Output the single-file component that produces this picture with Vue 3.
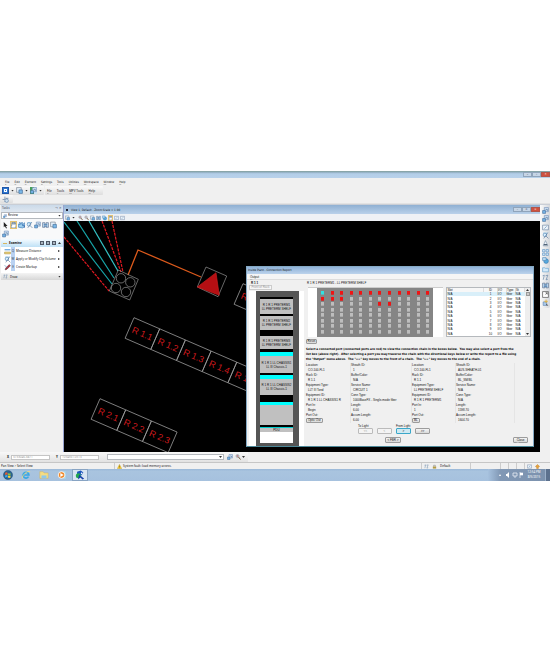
<script setup>
import { ref } from 'vue'

const menus = ['File', 'Edit', 'Element', 'Settings', 'Tools', 'Utilities', 'Workspace', 'Window', 'Help']
const subMenus = ['File', 'Tools', 'MPV Tools', 'Help']
const taskTools = ['cursor', 'hand', 'handblue', 'lens', 'page', 'grid', 'pages', 'page']
const examine = [
  { key: 'Q', icon: 'ruler', label: 'Measure Distance' },
  { key: 'W', icon: 'lens', label: 'Apply or Modify Clip Volume' },
  { key: 'E', icon: 'pen', label: 'Create Markup' },
]
const viewTools = ['zoomin', 'zoomout', 'pages', 'grid', 'orbit', 'hand', 'frame', 'frame']
const sideTools = ['page', 'page', 'frame', 'lens', 'cone', 'cells', 'orbit', 'folder', 'zigzag', 'grid', 'window', 'sparkpen']

const rowOne = ['R 1.1', 'R 1.2', 'R 1.3', 'R 1.4', 'R 1.5']
const rowTwo = ['R 2.1', 'R 2.2', 'R 2.3']

const red = new Set([1, 2, 3, 4, 5, 6, 7, 8, 9, 10, 11, 12, 13, 14, 30, 31])
const ports = Array.from({ length: 96 }, (_, i) => (i === 0 ? 'current' : red.has(i) ? 'red' : ''))

const left = [
  ['Location:', 'CO-100-FL1'], ['Rack ID:', 'R 1.1'], ['Equipment Type:', 'LLT III Tond'],
  ['Equipment ID:', 'R 1 R 1 LL CHASSIS1 R'], ['Port In:', 'Begin'],
]
const leftB = [
  ['Sheath ID:', '1'], ['Buffer/Color:', 'N/A'], ['Service Name:', 'CIRCUIT 1'],
  ['Conn Type:', '1000BaseFX - Single-mode fiber'], ['Length:', '6.00'], ['Accum Length:', '6.00'],
]
const right = [
  ['Location:', 'CO-100-FL1'], ['Rack ID:', 'R 1.1'], ['Equipment Type:', 'LL PRETERM SHELF'],
  ['Equipment ID:', 'R 1 R 1 PRETERM1'], ['Port In:', '1'],
]
const rightB = [
  ['Sheath ID:', 'AUS-SHEATH-01'], ['Buffer/Color:', 'BL_SM/BL'], ['Service Name:', 'N/A'],
  ['Conn Type:', 'N/A'], ['Length:', '1598.70'], ['Accum Length:', '1604.70'],
]
const coordX = ref('3733046.3871')
const coordY = ref('1094561.0513')
</script>

<template>
  <svg class="defs" aria-hidden="true">
    <symbol id="cursor" viewBox="0 0 12 12"><path d="M3 1v9l2-2 2 4 1.500-1-2-3.500h3z" fill="#222" /></symbol>
    <symbol id="hand" viewBox="0 0 12 12"><path d="M3 11 1 6l2 1V2l1.500 0 .5 3V1h1.500l.5 4 1-4h1v4l1-2 1 .5-1 5-1 2.500z" fill="#fff" stroke="#4d6f96" /></symbol>
    <symbol id="handblue" viewBox="0 0 12 12"><path d="M1 10V4l2 2V1l2 4 2-4 1 5 3-4v7l-3 2z" fill="#9fd0ef" stroke="#2a6db0" /><path d="M7 7h4v4" stroke="#1d4f97" fill="none" /></symbol>
    <symbol id="lens" viewBox="0 0 12 12"><path d="M2 1h8L7 5 3 7z" fill="#a9d2ee" /><circle cx="5" cy="5" r="3" fill="#d8f0ff" stroke="#5682ae" /><path d="m7 7 4 4M10 1 3 11" stroke="#4b6b90" /></symbol>
    <symbol id="page" viewBox="0 0 12 12"><path d="M4 1h7v7H4z" fill="#d7e9fa" stroke="#6684b0" /><path d="M1 6h5v5H1z" fill="#73b2e3" stroke="#456c9d" /><path d="M6 4h3v3" fill="none" stroke="#385980" /></symbol>
    <symbol id="pages" viewBox="0 0 12 12"><path d="M1 1h8v8H1z" fill="#e4f0fa" stroke="#6c7785" /><path d="M5 5h6v6H5z" fill="#7ab8e8" stroke="#376493" /></symbol>
    <symbol id="grid" viewBox="0 0 12 12"><path d="M1 2h4v8H1zM7 2h4v8H7z" fill="#c8e0f5" stroke="#4b6180" /><path d="M3 5h6M3 8h6" stroke="#246daf" /></symbol>
    <symbol id="cells" viewBox="0 0 12 12"><path d="M1 1h4v4H1zM7 1h4v4H7zM1 7h4v4H1zM7 7h4v4H7z" fill="#d8ecfb" stroke="#4d88bc" /></symbol>
    <symbol id="ruler" viewBox="0 0 12 12"><path d="M1 3h10" stroke="#5c9edc" stroke-width="2" /><path d="M1 7h10v3H1z" fill="#f4d776" stroke="#a79046" /></symbol>
    <symbol id="pen" viewBox="0 0 12 12"><path d="m2 10 1-3 6-6 2 2-6 6z" fill="#b92b33" stroke="#5a3b4e" /><path d="m1 2 5 5" stroke="#5588bb" /></symbol>
    <symbol id="sparkpen" viewBox="0 0 12 12"><path d="M2 5h6v6H2z" fill="#a9c9ea" stroke="#5c80ac" /><path d="M7 1v6M4 4h6" stroke="#e2b13d" stroke-width="1.500" /><path d="m7 8 4 3H8z" fill="#333" /></symbol>
    <symbol id="rotate" viewBox="0 0 12 12"><path d="M5 1v5H1M4 9h3V4h4" fill="none" stroke="#6f87a3" stroke-width="1.300" /><circle cx="8" cy="8" r="3" fill="#cfe1f1" stroke="#5c7fa6" /></symbol>
    <symbol id="zoomin" viewBox="0 0 12 12"><circle cx="5" cy="4" r="3" fill="#d9e7ef" stroke="#707a85" /><path d="m7 6 4 5" stroke="#735738" stroke-width="2" /><path d="M5 2v4M3 4h4" stroke="#b65656" /></symbol>
    <symbol id="zoomout" viewBox="0 0 12 12"><circle cx="5" cy="4" r="3" fill="#d9e7ef" stroke="#707a85" /><path d="m7 6 4 5" stroke="#735738" stroke-width="2" /><path d="M3 4h4" stroke="#b65656" /></symbol>
    <symbol id="orbit" viewBox="0 0 12 12"><circle cx="7" cy="7" r="4" fill="#57aade" stroke="#3675ad" /><path d="M1 1h6v5H1z" fill="#b9dcf3" stroke="#4b84b5" /></symbol>
    <symbol id="frame" viewBox="0 0 12 12"><path d="M1 2h10v8H1z" fill="#edf4fa" stroke="#5e7898" /><path d="m4 8 4-4" stroke="#4779aa" /></symbol>
    <symbol id="cone" viewBox="0 0 12 12"><path d="m6 1-4 9h8z" fill="#f4f7fb" stroke="#718ba6" /><path d="M3 8h6" stroke="#46576b" stroke-width="2" /></symbol>
    <symbol id="folder" viewBox="0 0 12 12"><path d="M1 3h4l1 1h5v6H1z" fill="#d4ebfb" stroke="#5d9bc9" /></symbol>
    <symbol id="zigzag" viewBox="0 0 12 12"><path d="m1 3 3-1-2 8M6 3l4-1-3 8 3-1" fill="none" stroke="#52779c" /></symbol>
    <symbol id="window" viewBox="0 0 12 12"><path d="M1 1h10v10H1z" fill="#fff" stroke="#333" /><path d="m6 6 3-3M6 3h3v3" stroke="#333" fill="none" /></symbol>
  </svg>

  <main class="desktop">
    <header class="titlebar">
      <span class="winbtns"><button aria-label="Minimize">–</button><button aria-label="Restore">▫</button><button class="x" aria-label="Close window">×</button></span>
    </header>
    <nav class="menubar"><a v-for="m in menus" :key="m" href="#"><u>{{ m[0] }}</u>{{ m.slice(1) }}</a></nav>
    <div class="toolrow">
      <div class="bar">
        <button class="big blue" aria-label="Element selection"><i></i></button><b class="caret"></b>
        <button class="big" aria-label="Fence"><svg><use href="#pages" /></svg></button><b class="caret"></b>
        <button class="big green" aria-label="Models"><svg><use href="#page" /></svg></button><b class="caret"></b>
      </div>
      <nav class="bar submenu"><a v-for="m in subMenus" :key="m" href="#"><u>{{ m[0] }}</u>{{ m.slice(1) }}</a></nav>
    </div>
    <div class="toolrow second"><div class="bar"><button class="big" aria-label="Rotate"><svg><use href="#rotate" /></svg></button></div></div>

    <div class="work">
      <aside class="tasks">
        <div class="taskhead"><span>Tasks</span><span>⊣ ✕</span></div>
        <label class="select"><svg><use href="#page" /></svg>
          <select aria-label="Task"><option>Review</option></select><b class="caret"></b></label>
        <div class="palette">
          <button v-for="(t, i) in taskTools" :key="i" :class="{ on: i === 1 }" :aria-label="t"><svg><use :href="'#' + t" /></svg></button>
        </div>
        <section class="group">
          <h2><span class="dash"></span>Examine<span class="sp"></span><i class="sq"></i><i class="sq"></i><i class="sq"></i><b class="caret up"></b></h2>
          <button v-for="e in examine" :key="e.key" class="item">
            <svg><use :href="'#' + e.icon" /></svg><kbd>{{ e.key }}</kbd><span>{{ e.label }}</span><b class="go"></b>
          </button>
        </section>
        <h2 class="draw"><svg><use href="#zigzag" /></svg>Draw<span class="sp"></span><b class="caret"></b></h2>
      </aside>

      <section class="view">
        <header class="viewtitle"><i class="mark"></i><span>View 1, Default - Zoom Scale = 1.00</span>
          <span class="winbtns"><button aria-label="Minimize view">–</button><button aria-label="Restore view">▫</button><button class="x" aria-label="Close view">×</button></span>
        </header>
        <div class="viewtools">
          <button aria-label="View attributes"><svg><use href="#pages" /></svg></button><b class="caret"></b>
          <button v-for="(t, i) in viewTools" :key="i" :class="{ on: i === 5 }" :aria-label="t"><svg><use :href="'#' + t" /></svg></button>
        </div>
        <div class="canvas">
          <svg class="plan" viewBox="64 220 476 231">
            <g fill="none" stroke="#17a3a6" stroke-width="1.200">
              <path d="M64 221 112 283M77 220l37 57" /><path d="m89 220 29 50" stroke="#35c2c5" />
            </g>
            <g fill="none" stroke="#e01820" stroke-width="1.200" stroke-dasharray="3 1">
              <path d="m64 236 45 54M102 220l19 51M112 220l11 51" />
            </g>
            <path d="m128 274 10-25 63 27" fill="none" stroke="#dc5a1c" stroke-width="1.300" />
            <g fill="none" stroke="#929292" stroke-width=".7">
              <path d="m118.300 269 20 9.300-8.600 20.700-20.400-9z" />
              <circle cx="121" cy="277.300" r="4.700" /><circle cx="130.300" cy="281.300" r="4.700" />
              <circle cx="116" cy="287" r="4.700" /><circle cx="126" cy="291" r="4.700" />
              <path d="m206 266 20.700 9-8.700 20.700-20.700-9.700z" />
            </g>
            <path d="m216 271.700-18.700 14.300 22 8.300z" fill="#b50f13" stroke="#d32020" stroke-width=".6" />
            <g transform="translate(243 282.700) rotate(23.400)">
              <rect width="28" height="22.400" /><text x="14" y="14.500" text-anchor="middle">R 0.1</text>
            </g>
            <g transform="translate(134 316.700) rotate(23.400)">
              <g v-for="(r, i) in rowOne" :key="r"><rect :x="i * 28" width="28" height="22.400" /><text :x="i * 28 + 14" y="14.500" text-anchor="middle">{{ r }}</text></g>
            </g>
            <g transform="translate(100 397.700) rotate(23.400)">
              <g v-for="(r, i) in rowTwo" :key="r"><rect :x="i * 28" width="28" height="22.400" /><text :x="i * 28 + 14" y="14.500" text-anchor="middle">{{ r }}</text></g>
            </g>
          </svg>
        </div>
      </section>

      <aside class="side"><div class="sidebar">
        <button v-for="(t, i) in sideTools" :key="i" :aria-label="t"><svg><use :href="'#' + t" /></svg></button>
      </div></aside>

      <section class="dialog" role="dialog" aria-label="Connection Report">
        <header>Inside Plant - Connection Report</header>
        <nav><a href="#"><u>O</u>utput</a></nav>
        <div class="dbody">
          <div class="rackcol">
            <strong>R 1 1</strong>
            <button class="front">Front of Rack</button>
            <div class="rackbg"><div class="rack"><div class="slots">
              <div class="shelf a">R 1 R 1 PRETERM1<br>LL PRETERM SHELF</div>
              <div class="shelf b">R 1 R 1 PRETERM2<br>LL PRETERM SHELF</div>
              <div class="shelf c">R 1 R 1 PRETERM3<br>LL PRETERM SHELF</div>
              <div class="shelf d">R 1 R 1 LL CHASSIS1<br>LL III Chassis-1</div>
              <div class="shelf e">R 1 R 1 LL CHASSIS2<br>LL III Chassis-1</div>
              <div class="shelf f"></div>
              <div class="shelf pdu">PDU</div>
              <div class="shelf blank"></div>
            </div></div></div>
          </div>
          <div class="report">
            <div class="rtitle">R 1 R 1 PRETERM1 - LL PRETERM SHELF</div>
            <div class="top">
              <div class="portbox"><div class="ports"><i v-for="(p, i) in ports" :key="i" :class="p"></i></div></div>
              <div class="list">
                <table>
                  <thead><tr><th class="slot">Slot</th><th class="id">ID</th><th>I/O</th><th>Type</th><th>St</th></tr></thead>
                  <tbody><tr v-for="n in 10" :key="n" :class="{ sel: n === 1 }"><td>N/A</td><td class="id">{{ n }}</td><td>I/O</td><td>fiber</td><td>N/A</td></tr></tbody>
                </table>
                <div class="scroll"><b class="caret up"></b><i></i><span class="sp"></span><b class="caret"></b></div>
              </div>
            </div>
            <button class="btn reset">Reset</button>
            <p>Select a connected port (connected ports are red) to view the connection chain in the boxes below.&nbsp; You may also select a port from the<br>list box (above right).&nbsp; After selecting a port you may traverse the chain with the directional keys below or write the report to a file using<br>the "Output" menu above.&nbsp; The "&lt;&lt;" key moves to the front of a chain.&nbsp; The "&gt;&gt;" key moves to the end of a chain.</p>
            <div class="info">
              <dl><template v-for="f in left" :key="f[0]"><dt>{{ f[0] }}</dt><dd>{{ f[1] }}</dd></template><dt>Port Out:</dt><dd class="cell"><button class="btn">Optic Out</button></dd></dl>
              <dl class="sec"><template v-for="f in leftB" :key="f[0]"><dt>{{ f[0] }}</dt><dd>{{ f[1] }}</dd></template></dl>
              <dl><template v-for="f in right" :key="f[0]"><dt>{{ f[0] }}</dt><dd>{{ f[1] }}</dd></template><dt>Port Out:</dt><dd class="cell"><button class="btn">BL</button></dd></dl>
              <dl class="sec"><template v-for="f in rightB" :key="f[0]"><dt>{{ f[0] }}</dt><dd>{{ f[1] }}</dd></template></dl>
            </div>
            <div class="nav">
              <div><span>To Light</span><button class="btn off">&lt;&lt;</button></div>
              <div><span></span><button class="btn off">&lt;</button></div>
              <div><span>From Light</span><button class="btn focus">&gt;</button></div>
              <div><span></span><button class="btn">&gt;&gt;</button></div>
            </div>
            <div class="foot"><span></span><button class="btn">&lt; FBR &gt;</button><button class="btn close"><u>C</u>lose</button></div>
          </div>
        </div>
      </section>
    </div>

    <div class="coords">
      <label for="cx">X</label><input id="cx" v-model="coordX">
      <label for="cy">Y</label><input id="cy" v-model="coordY">
      <label class="select keyin"><select aria-label="Key-in"><option></option></select><b class="caret"></b></label>
      <button aria-label="Find"><svg><use href="#page" /></svg></button>
      <button aria-label="Filter"><svg><use href="#zoomin" /></svg></button><b class="caret"></b>
    </div>
    <footer class="status">
      <span class="msg">Pan View &gt; Select View</span>
      <span class="warn"><svg viewBox="0 0 12 12"><path d="m6 1 5 10H1z" fill="#ffd42e" stroke="#b68e15" /><path d="M6 4v4M6 9v1" stroke="#222" /></svg>System fault: load memory access.</span>
      <span class="lvl"><svg><use href="#zigzag" /></svg><svg viewBox="0 0 12 12"><path d="M2 6h8v5H2z" fill="#b39b45" /><path d="M4 6V3h4v3" fill="none" stroke="#666" /></svg>Default</span>
      <span class="c1"></span><span class="c2"></span><span class="c2"></span><span class="c2"></span>
      <span class="c3"><svg><use href="#frame" /></svg><svg viewBox="0 0 12 12"><path d="m6 1 5 5-3 1v4H4V7L1 6z" fill="#e8a63c" stroke="#b5731f" /></svg></span>
    </footer>
    <footer class="taskbar">
      <button aria-label="Start"><svg viewBox="0 0 24 24"><circle cx="12" cy="12" r="11" fill="#286493" stroke="#1e4560" /><path d="M5 7q4-3 6 0v5q-3-2-6 0z" fill="#e75b31" /><path d="M12 7q3 3 6 0v5q-3 3-6 0z" fill="#8dc63f" /><path d="M5 13q4-2 6 0v5q-3-2-6 0z" fill="#39a9e9" /><path d="M12 13q3 3 6 0v5q-3 2-6 0z" fill="#ffd03b" /></svg></button>
      <button aria-label="Browser"><svg viewBox="0 0 24 24"><path d="M18 16a7 7 0 1 1 1-4H7" fill="none" stroke="#36a7e5" stroke-width="4" /><path d="M3 20C3 12 15 1 22 4" fill="none" stroke="#f4dc77" stroke-width="2" /></svg></button>
      <button aria-label="Explorer"><svg viewBox="0 0 24 24"><path d="M2 4h8l2 3h10v13H2z" fill="#f5dc83" stroke="#d0af52" /><path d="M6 13h12v7H6z" fill="#8fc8ea" /></svg></button>
      <button aria-label="Media player"><svg viewBox="0 0 24 24"><path d="M15 3h6v18h-6z" fill="#a6dbef" /><circle cx="11" cy="12" r="8" fill="#ee8526" stroke="#fff" stroke-width="2" /><path d="m8 7 8 5-8 5z" fill="#fff" /></svg></button>
      <button class="active" aria-label="Map editor"><svg viewBox="0 0 24 24"><path d="M5 4 14 1l6 5-5 7-10-3z" fill="#1c55bd" /><circle cx="8" cy="14" r="6" fill="#24a850" /><path d="m10 11 12 10-4 2-5-5-6 5z" fill="#173fa8" /><circle cx="16" cy="8" r="2" fill="#fff" /></svg></button>
      <span class="sp"></span>
      <div class="tray">
        <svg viewBox="0 0 24 8"><path d="m0 5 1-2 1 2z" fill="#fff" /><path d="M7 3h1l2-2v6L8 5H7z" fill="#fff" /><path d="M14 2h4v3h-4zM15 6h2" fill="none" stroke="#e8eef5" stroke-width=".8" /><path d="M21 1v6M21 2h3v2h-3" fill="#fff" stroke="#fff" stroke-width=".6" /></svg>
        <time>12:54 PM<br>8/5/2015</time><i></i>
      </div>
    </footer>
  </main>
</template>

<style>
body { background: #fff; }
#app { padding: 171px 0; }
</style>

<style scoped>
* { box-sizing: border-box; }
.defs { position: absolute; width: 0; height: 0; }
.desktop { font: 3px/4px "Noto Sans", "Open Sans", sans-serif; color: #111; background: #f0f0f0; overflow: hidden; }
button, input, select { font: inherit; color: inherit; margin: 0; padding: 0; border: 0; background: none; min-width: 0; border-radius: 0; }
button { display: flex; align-items: center; justify-content: center; }
button svg { width: 100%; height: 100%; display: block; }
a { color: inherit; text-decoration: none; white-space: nowrap; }
u { text-decoration-thickness: 1px; text-decoration-color: #bbb; }
.sp { flex: 1; }
.caret { width: 3px; height: 2px; flex: none; background: #333; clip-path: polygon(0 0, 100% 0, 50% 100%); }
.caret.up { clip-path: polygon(50% 0, 100% 100%, 0 100%); }

.titlebar { height: 7px; display: flex; justify-content: flex-end; background: linear-gradient(#8da9bb, #b3cee8 30%, #b8d1ea); border-top: 1px solid #88a5a9; }
.winbtns { display: flex; height: 5px; margin-left: auto; }
.winbtns button { width: 9px; border: 1px solid #8fa4bb; background: #c6d5e6; color: #334; line-height: 3px; }
.winbtns .x { background: #cf5140; border-color: #b0564c; color: #fff; }
.menubar { height: 8px; display: flex; align-items: center; gap: 5px; padding-left: 5px; font-family: "DejaVu Sans Condensed", "Noto Sans", sans-serif; }
.toolrow { height: 9px; display: flex; gap: 1px; }
.bar { display: flex; align-items: center; gap: 1px; padding: 0 2px; background: linear-gradient(#fafafa, #dedede); border-radius: 1px; }
.toolrow > .bar:first-child { gap: 2px; }
.submenu { width: 58px; gap: 5px; }
.second { border-bottom: 1px solid #e2e2e2; }
.second .bar { width: 13px; }
.big { width: 7px; height: 7px; }
.big.blue { background: #2f78d1; border: 1px solid #1e57a9; }
.big.blue i { width: 3px; height: 3px; border: 1px solid #fff; }
.big.green { background: linear-gradient(90deg, #45a058 50%, #cfe4f3 50%); }

.work { position: relative; display: flex; height: 248px; border-top: 1px solid #c9ced6; }
.tasks { width: 63px; flex: none; padding-left: 1px; background: #f0f0f0; }
.taskhead { height: 7px; display: flex; justify-content: space-between; padding: 1px 1px 0; background: linear-gradient(#cbdae9, #dfe7f0); color: #445; }
.select { display: flex; align-items: center; height: 7px; background: #fff; border: 1px solid #b5b9be; padding: 0 1px; gap: 1px; }
.select svg { width: 4px; height: 4px; }
.select select { flex: 1; appearance: none; height: 5px; line-height: 5px; outline: 0; }
.palette { display: grid; grid-template-columns: repeat(7, 7px); grid-auto-rows: 8px; gap: 1px; padding: 2px 1px; background: #f8f9fa; height: 20px; }
.on { background: #fde2a0; outline: 1px solid #e3c274; outline-offset: -1px; }
.group { background: #fff; height: 34px; }
h2 { margin: 0; height: 8px; display: flex; align-items: center; gap: 2px; padding: 0 2px; font-size: 3px; background: linear-gradient(#f5fbff, #bfe1f6); }
.dash { width: 4px; height: 1px; background: #d8b65e; }
.sq { width: 4px; height: 4px; border: 1px solid #4e5866; background: #a9b5c0; }
.item { width: 100%; height: 8px; padding-left: 3px; justify-content: flex-start; text-align: left; }
.item svg { width: 7px; height: 7px; flex: none; }
.item kbd { font: inherit; width: 4px; height: 8px; line-height: 8px; text-align: center; background: #bad2f2; color: #345; }
.item span { flex: 1; padding-left: 1px; white-space: nowrap; }
.go { width: 2px; height: 2px; margin-right: 3px; background: #222; clip-path: polygon(0 0, 100% 50%, 0 100%); }
.draw { height: 7px; background: linear-gradient(#f4f4f4, #d7d7d7); font-weight: 400; }
.draw svg { width: 5px; height: 5px; }

.view { flex: 1; min-width: 0; display: flex; flex-direction: column; border-left: 1px solid #98a3cf; }
.viewtitle { height: 9px; display: flex; align-items: center; gap: 3px; padding-left: 2px; background: linear-gradient(#8fb0d3, #b9d1ea); font-family: "DejaVu Sans Condensed", "Noto Sans", sans-serif; }
.viewtitle > span:nth-child(2) { white-space: nowrap; }
.mark { width: 2px; height: 2px; background: #223; }
.viewtools { height: 7px; display: flex; align-items: center; gap: 1px; padding-left: 1px; background: #eef1f5; }
.viewtools button { width: 5px; height: 6px; }
.viewtools .caret { margin: 0 2px 0 1px; }
.canvas { flex: 1; min-height: 0; background: #000; overflow: hidden; }
.plan { display: block; width: 476px; height: 231px; }
.plan rect { fill: none; stroke: #a0a0a0; stroke-width: .7px; }
.plan text { font: 9px "Liberation Sans", Arial, sans-serif; fill: #d01a1e; }
.side { width: 10px; flex: none; }
.sidebar { height: 103px; padding: 2px 1px; display: flex; flex-direction: column; justify-content: space-between; align-items: center; background: linear-gradient(90deg, #fafafa, #d5d8dc); border-radius: 0 0 2px 2px; }
.sidebar button { width: 7px; height: 7px; }

.dialog { position: absolute; left: 246px; top: 61px; width: 288px; height: 181px; display: flex; flex-direction: column; background: #f0f0f0; border: 1px solid #85a9c4; border-bottom-color: #4b8797; font-family: "Liberation Sans", Arial, sans-serif; }
.dialog header { height: 7px; line-height: 7px; padding-left: 1px; font-family: "DejaVu Sans Condensed", "Noto Sans", sans-serif; background: linear-gradient(#8fb2d8, #bcd3ec); }
.dialog nav { height: 6px; line-height: 6px; padding-left: 3px; background: #f5f5f5; border-bottom: 1px solid #ddd; }
.dbody { flex: 1; min-height: 0; display: flex; padding-top: 1px; }
.rackcol { width: 57px; flex: none; display: flex; flex-direction: column; padding-left: 2px; }
.rackcol strong { padding-left: 2px; line-height: 4px; }
.front { width: 23px; height: 5px; border: 1px solid #ccc; color: #999; background: #f6f6f6; line-height: 3px; margin-bottom: 1px; white-space: nowrap; }
.rackbg { flex: 1; background: #fff; display: flex; padding: 0 5px 0 7px; }
.rack { flex: 1; background: #555; padding: 6px 6px 3px 4px; display: flex; }
.slots { flex: 1; background: #000; display: flex; flex-direction: column; padding-top: 2px; }
.shelf { background: #c0c0c0; display: flex; flex-direction: column; justify-content: center; text-align: center; white-space: nowrap; color: #111; }
.a { height: 15px; margin-bottom: 2px; }
.b { height: 14px; margin-bottom: 6px; }
.c { height: 13px; margin-bottom: 3px; }
.d { height: 21px; margin-bottom: 2px; border-top: 4px solid #0ff; }
.e { height: 20px; margin-bottom: 7px; border-top: 4px solid #0ff; }
.f { height: 23px; margin-bottom: 2px; border-top: 3px solid #0ff; }
.pdu { height: 5px; border-top: 1px solid #0cc; }
.blank { flex: 1; background: #fff; }

.report { flex: 1; min-width: 0; display: flex; flex-direction: column; padding: 0 2px; }
.rtitle { padding-left: 1px; height: 6px; }
.top { display: grid; grid-template-columns: 8fr 5fr; gap: 3px; height: 50px; margin-left: 2px; }
.portbox { background: #fff; padding: 0 10px 0 9px; border-top: 1px solid #ccc; }
.ports { height: 100%; background: #858585; display: grid; grid-template-columns: repeat(12, 3px); grid-template-rows: repeat(8, 4px); justify-content: space-between; align-content: space-between; padding: 3px 4px; }
.ports i { background: #bdbdbd; border-bottom: 1px solid #aaa; }
.ports .red { background: #f01414; border-color: #c33; }
.ports .current { background: #2ee3e3; border-color: #5bb; }
.list { display: flex; background: #fff; border: 1px solid #b5b9bd; }
table { flex: 1; border-collapse: collapse; height: 48px; line-height: 4px; table-layout: fixed; width: 0; }
th, td { padding: 0; text-align: left; font-weight: 400; white-space: nowrap; width: 9px; }
th { border-right: 1px solid #ddd; background: #f7f7f7; }
th.slot { width: auto; }
.id { width: 14px; text-align: center; }
.sel td { background: #d9eff9; }
.scroll { width: 5px; background: #eee; display: flex; flex-direction: column; align-items: center; padding: 1px 0; }
.scroll i { width: 4px; height: 4px; margin-top: 1px; background: #ccc; border: 1px solid #999; }
.btn { height: 5px; line-height: 3px; border: 1px solid #9c9c9c; border-radius: 1px; background: linear-gradient(#f5f5f5, #d8d8d8); white-space: nowrap; padding: 0 1px; }
.reset { width: 11px; margin-top: 2px; flex: none; }
p { margin: 3px 0 1px; font-family: "DejaVu Sans Condensed", "Noto Sans", sans-serif; font-weight: 700; line-height: 5px; white-space: nowrap; color: #000; }
.info { display: grid; grid-template-columns: 44px 62px 43px 1fr; height: 56px; padding-right: 16px; margin-bottom: 5px; }
dl { margin: 0; display: grid; grid-template-rows: repeat(12, minmax(0, 1fr)); white-space: nowrap; }
.sec { border-left: 1px solid #e5e5e5; border-right: 1px solid #e5e5e5; }
dd { margin: 0 0 0 2px; }
dd.cell { margin-left: 0; }
.nav { display: flex; gap: 4px; height: 11px; margin-left: 52px; }
.nav div { width: 15px; }
.nav span { display: block; height: 4px; white-space: nowrap; }
.nav .btn { width: 15px; height: 6px; }
.nav .off { color: #999; border-color: #bbb; background: #f4f4f4; }
.nav .focus { border-color: #3aa7c9; background: #cfe9f2; }
.foot { display: grid; grid-template-columns: 79px 16px 1fr; margin-top: 2px; }
.foot .btn { height: 6px; }
.close { width: 15px; justify-self: end; margin-right: 3px; }

.coords { height: 10px; display: flex; align-items: center; width: 248px; padding: 0 3px 0 5px; background: linear-gradient(#f8f8f8, #e2e2e2); }
.coords label { font-weight: 700; }
.coords label[for] { width: 6px; flex: none; text-align: center; }
.coords input { width: 39px; height: 5px; line-height: 3px; border: 1px solid #c5c5c5; background: #fff; color: #999; margin-right: 4px; padding: 0 1px; }
.keyin { flex: 1; height: 6px; margin: 0 2px 0 4px; }
.coords button { width: 6px; height: 6px; margin: 0 1px; flex: none; }
.status { height: 7px; display: flex; align-items: stretch; border-top: 1px solid #c6c6c6; line-height: 6px; white-space: nowrap; }
.status span { display: flex; align-items: center; gap: 3px; border-right: 1px solid #ccc; padding-left: 1px; }
.status svg { width: 5px; height: 5px; }
.msg { width: 115px; }
.status .warn { flex: 1; padding-left: 2px; gap: 1px; }
.status .lvl { width: 49px; padding-left: 2px; }
.c1 { width: 30px; }
.c2 { width: 8px; }
.status .c3 { width: 25px; border: 0; padding-left: 2px; }
.taskbar { height: 12px; display: flex; align-items: center; gap: 2px; background: linear-gradient(#9ab8d8, #a9c4df 20%, #a6c1de); }
.taskbar button { width: 16px; height: 12px; padding: 1px; }
.taskbar .active { background: #d8e5f1; border: 1px solid #88a4c3; padding: 0; }
.tray { display: flex; align-items: center; width: 62px; height: 12px; padding-left: 11px; background: linear-gradient(90deg, #a6c1de, #8198b5 20%, #7b91ad); color: #fff; }
.tray svg { width: 24px; height: 8px; }
.tray time { flex: 1; text-align: center; line-height: 5px; white-space: nowrap; }
.tray i { width: 5px; height: 12px; background: #5c718e; border-left: 1px solid #9bb0c9; }
</style>
